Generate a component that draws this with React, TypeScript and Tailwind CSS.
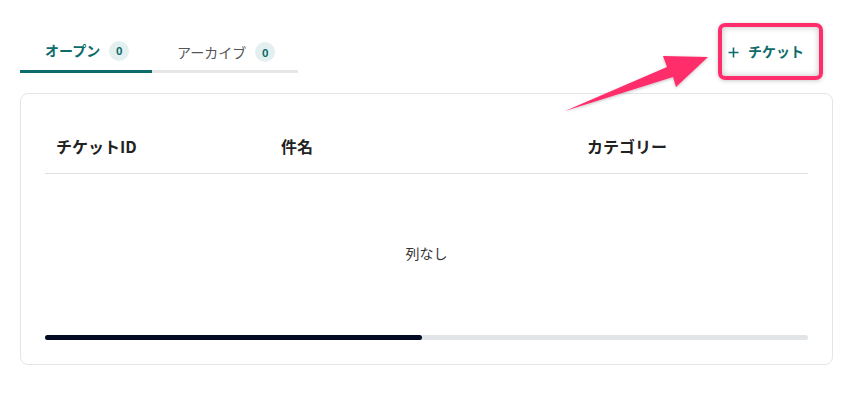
import React from "react";

export default function App() {
  const font = { fontFamily: '"Noto Sans CJK JP", "Noto Sans", sans-serif' };
  return (
    <div className="relative w-[844px] h-[393px] bg-white overflow-hidden" style={font}>
      <div className="pl-5 pr-[11px]">
        <div className="flex items-start justify-between h-[93px]">
          <div className="flex mt-[31px] border-b-[3px] border-[#e6e6e6]">
            <div className="w-[132px] h-[42px] -mb-[3px] border-b-[3px] border-[#0e6b6b] flex items-center pl-[25px] gap-[9px]">
              <span className="text-[14px] font-bold text-[#0e6b6b]">オープン</span>
              <span className="w-5 h-5 rounded-full bg-[#e4eff0] text-[#0e6b6b] text-[11px] font-bold flex items-center justify-center">0</span>
            </div>
            <div className="w-[146px] h-[42px] -mb-[3px] flex items-center pl-[25px] gap-[9px]">
              <span className="text-[14px] text-[#555555]">アーカイブ</span>
              <span className="w-5 h-5 rounded-full bg-[#e4eff0] text-[#0e6b6b] text-[11px] font-bold flex items-center justify-center">0</span>
            </div>
          </div>
          <div className="mt-[23px] mr-[10px] w-[105px] h-[57px] rounded-[7px] border-[4px] border-[#ff2d6b] shadow-[inset_0_0_6px_rgba(0,0,0,0.25),0_1px_4px_rgba(0,0,0,0.2)] flex items-center pl-[6px]">
            <span className="text-[#0e6b6b] text-[14px] font-bold flex items-center gap-[9px]">
              <svg width="11" height="11" viewBox="0 0 11 11" className="mt-[1px]">
                <path d="M5.5 0.5V10.5M0.5 5.5H10.5" stroke="#0e6b6b" strokeWidth="1.6" fill="none" />
              </svg>
              <span>チケット</span>
            </span>
          </div>
        </div>
        <div className="rounded-[8px] border border-[#e3e5e8] pt-6 pb-6 px-[24px]">
          <div className="flex h-[56px] border-b border-[#dcdfe3] items-center text-[16px] font-bold text-[#222222]">
            <div className="w-[225px] pl-[11px]">チケットID</div>
            <div className="w-[306px] pl-[11px]">件名</div>
            <div className="flex-1 pl-[11px]">カテゴリー</div>
          </div>
          <div className="h-[161px] flex items-center justify-center text-[14px] text-[#333333] pb-[3px]">列なし</div>
          <div className="h-[5px] rounded-full bg-[#e2e5e8]">
            <div className="h-[5px] w-[377px] rounded-full bg-[#020a24]" />
          </div>
        </div>
      </div>
      <svg className="absolute left-0 top-0 pointer-events-none" width="844" height="393">
        <defs>
          <filter id="sh" x="-20%" y="-20%" width="140%" height="140%">
            <feDropShadow dx="0" dy="1" stdDeviation="1.5" floodColor="#000" floodOpacity="0.25" />
          </filter>
        </defs>
        <polygon
          points="565,111 667,67 663,56 708,57 676,87 673,77"
          fill="#ff2d6b"
          filter="url(#sh)"
        />
      </svg>
    </div>
  );
}
